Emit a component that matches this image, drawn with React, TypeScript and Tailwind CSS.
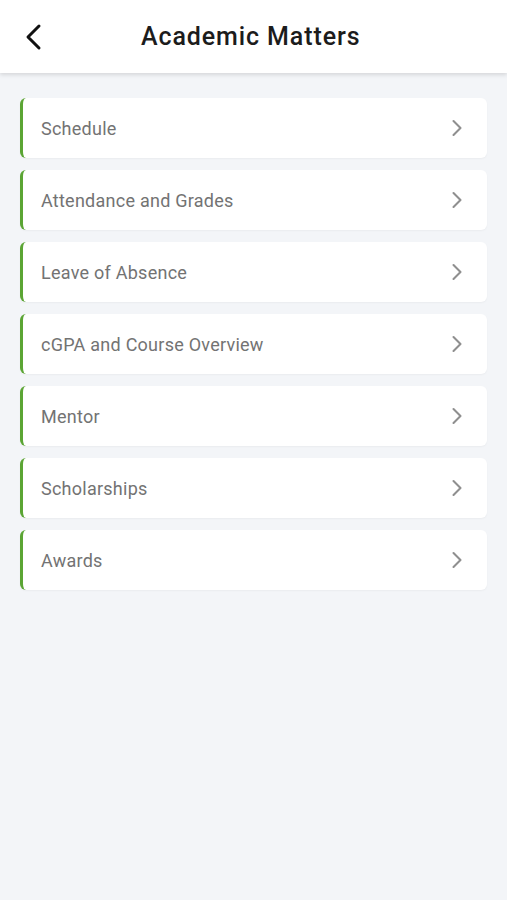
import { ChevronRight } from "lucide-react";

const items = [
  "Schedule",
  "Attendance and Grades",
  "Leave of Absence",
  "cGPA and Course Overview",
  "Mentor",
  "Scholarships",
  "Awards",
];

export default function App() {
  return (
    <div className="min-h-screen bg-[#f3f5f8] font-['Roboto',sans-serif]">
      {/* Header */}
      <header className="relative flex h-[73px] items-center bg-white shadow-[0_2px_4px_rgba(0,0,0,0.12)]">
        <button className="absolute left-[20px] top-[21px] flex h-[32px] w-[28px] items-center justify-center">
          <svg width="22" height="28" viewBox="0 0 22 28" fill="none">
            <path d="M16 3 L5 14 L16 25" stroke="#111" strokeWidth="3" strokeLinecap="round" strokeLinejoin="round" />
          </svg>
        </button>
        <h1 className="ml-[141px] text-[25px] font-medium tracking-[0.9px] text-[#1c1c1c]">Academic Matters</h1>
      </header>

      {/* List */}
      <div className="flex flex-col gap-[12px] px-[20px] pt-[25px]">
        {items.map((label) => (
          <div
            key={label}
            className="flex h-[60px] items-center justify-between rounded-[6px] border-l-[3px] border-[#5ba534] bg-white pl-[18px] pr-[22px] shadow-[0_1px_2px_rgba(0,0,0,0.04)]"
          >
            <span className="text-[18px] tracking-[0.25px] text-[#737373]">{label}</span>
            <ChevronRight className="-mr-[6px] h-[28px] w-[28px] text-[#8f8f8f]" strokeWidth={1.8} />
          </div>
        ))}
      </div>
    </div>
  );
}
